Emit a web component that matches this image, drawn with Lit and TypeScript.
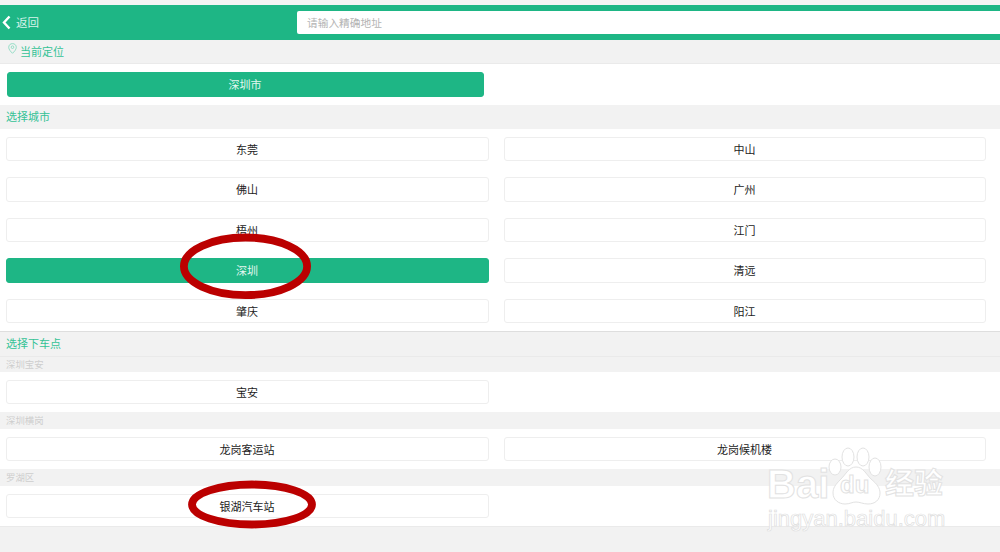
import { LitElement, html, css } from 'lit';
import { customElement } from 'lit/decorators.js';

const cities = ['东莞', '中山', '佛山', '广州', '梧州', '江门', '深圳', '清远', '肇庆', '阳江'];

@customElement('app-root')
export class AppRoot extends LitElement {
  static styles = css`
    :host {
      display: block;
      position: relative;
      width: 1000px;
      height: 552px;
      overflow: hidden;
      background: #f2f2f2;
      font-family: "Liberation Sans", "Noto Sans CJK SC", sans-serif;
      font-size: 11px;
      color: #222;
    }

    .top {
      height: 5px;
      background: #f4f4f4;
    }

    .header {
      height: 35px;
      box-sizing: border-box;
      padding: 6px 0 6px 2px;
      display: flex;
      align-items: center;
      background: #1eb685;
      color: #d8f3ea;
    }

    .back {
      display: flex;
      align-items: center;
      gap: 5px;
      width: 295px;
      font-size: 11.5px;
    }

    .back span {
      margin-top: -2px;
    }

    .search {
      flex: 1;
      height: 23px;
      box-sizing: border-box;
      padding: 0 10px 1px;
      display: flex;
      align-items: center;
      background: #fff;
      border-radius: 2px 0 0 2px;
      color: #b4b4b4;
      font-size: 10.7px;
    }

    .title {
      height: 24px;
      box-sizing: border-box;
      padding: 0 0 2px 6px;
      display: flex;
      align-items: center;
      gap: 3px;
      background: #f2f2f2;
      color: #35c296;
    }

    .title.located {
      border-bottom: 1px solid #eaeaea;
      padding-left: 8px;
    }

    .title.located svg {
      margin-top: -4px;
    }

    .sub {
      height: 16.5px;
      box-sizing: border-box;
      padding: 0 0 1px 6px;
      display: flex;
      align-items: center;
      background: #f2f2f2;
      color: #cecece;
      font-size: 9.4px;
    }

    .sub.first {
      border-top: 1px solid #eaeaea;
      height: 15.5px;
    }

    .panel {
      background: #fff;
      padding: 8px 14px 8px 6px;
      display: grid;
      grid-template-columns: 483px 482px;
      column-gap: 15px;
      row-gap: 16.1px;
    }

    .panel.current {
      padding: 8px 516px 8px 7px;
      grid-template-columns: 477px;
    }

    .panel.cities {
      border-bottom: 1px solid #dedede;
    }

    .panel.last {
      border-bottom: 1px solid #eaeaea;
    }

    .btn {
      height: 24.5px;
      box-sizing: border-box;
      padding: 0 1px 0.4px 0;
      display: flex;
      align-items: center;
      justify-content: center;
      background: #fff;
      border: 1px solid #eeeeee;
      border-radius: 3px;
    }

    .btn.on {
      background: #1eb685;
      border-color: #1eb685;
      color: #e4f7f0;
    }

    .marks {
      position: absolute;
      inset: 0;
      pointer-events: none;
    }

    .watermark {
      position: absolute;
      left: 767px;
      top: 445px;
      width: 190px;
      height: 90px;
      pointer-events: none;
      color: #fff;
      -webkit-text-stroke: 1px #e2e2e2;
    }

    .wm-brand {
      position: absolute;
      left: 0;
      top: 17px;
      font-family: "Liberation Sans", sans-serif;
      font-size: 40px;
      font-weight: 700;
      line-height: 44px;
      white-space: nowrap;
    }

    .wm-du {
      position: absolute;
      left: 73px;
      top: 27px;
      font-family: "Liberation Sans", sans-serif;
      font-size: 24px;
      font-weight: 700;
      line-height: 26px;
    }

    .wm-cn {
      position: absolute;
      left: 118px;
      top: 16px;
      font-family: "Noto Sans CJK SC", sans-serif;
      font-size: 29px;
      font-weight: 700;
      line-height: 40px;
      white-space: nowrap;
    }

    .wm-url {
      position: absolute;
      left: 1px;
      top: 62px;
      font-family: "Liberation Sans", sans-serif;
      font-size: 22px;
      line-height: 24px;
      white-space: nowrap;
      -webkit-text-stroke: 0.7px #dedede;
    }

    .watermark svg {
      position: absolute;
      left: 0;
      top: 0;
    }
  `;

  render() {
    return html`
      <div class="top"></div>
      <div class="header">
        <div class="back">
          <svg width="9" height="15" viewBox="0 0 9 15">
            <path d="M7.5 1.5 2 7.5l5.500 6" fill="none" stroke="#fff" stroke-width="2.400"></path>
          </svg>
          <span>返回</span>
        </div>
        <div class="search">请输入精确地址</div>
      </div>

      <div class="title located">
        <svg width="9" height="11" viewBox="0 0 9 11">
          <path d="M4.500.6C2.300.6.700 2.200.700 4.300c0 2.300 2.200 4.400 3.800 6 1.600-1.600 3.800-3.700 3.800-6C8.300 2.200 6.700.6 4.500.6z" fill="none" stroke="#7fd8bb" stroke-width=".8"></path>
          <circle cx="4.500" cy="4.200" r="1.300" fill="none" stroke="#7fd8bb" stroke-width=".8"></circle>
        </svg>
        <span>当前定位</span>
      </div>
      <div class="panel current"><div class="btn on">深圳市</div></div>

      <div class="title">选择城市</div>
      <div class="panel cities">
        ${cities.map((c) => html`<div class="btn ${c === '深圳' ? 'on' : ''}">${c}</div>`)}
      </div>

      <div class="title">选择下车点</div>
      <div class="sub first">深圳宝安</div>
      <div class="panel"><div class="btn">宝安</div></div>
      <div class="sub">深圳横岗</div>
      <div class="panel">
        <div class="btn">龙岗客运站</div>
        <div class="btn">龙岗候机楼</div>
      </div>
      <div class="sub">罗湖区</div>
      <div class="panel last"><div class="btn">银湖汽车站</div></div>

      <svg class="marks" width="1000" height="552" viewBox="0 0 1000 552">
        <ellipse cx="245.500" cy="266.300" rx="61.600" ry="28.800" fill="none" stroke="#bb0000" stroke-width="7.800"></ellipse>
        <ellipse cx="252" cy="504.500" rx="60" ry="20" fill="none" stroke="#bb0000" stroke-width="7.800"></ellipse>
      </svg>

      <div class="watermark">
        <svg width="190" height="60" viewBox="0 0 190 60">
          <g fill="#fff" stroke="#e2e2e2">
            <ellipse cx="68" cy="22" rx="6" ry="8"></ellipse>
            <ellipse cx="81" cy="12" rx="6" ry="9"></ellipse>
            <ellipse cx="96" cy="12" rx="6" ry="9"></ellipse>
            <ellipse cx="108" cy="22" rx="6" ry="9"></ellipse>
            <path d="M89 22c-7 0-10 7-15 12-6 6-8 9-8 14 0 7 6 11 12 11 5 0 7-2 11-2s7 2 12 2c7 0 12-4 12-11 0-5-3-9-9-14-5-5-8-12-15-12z"></path>
          </g>
        </svg>
        <span class="wm-brand">Bai</span>
        <span class="wm-du">du</span>
        <span class="wm-cn">经验</span>
        <span class="wm-url">jingyan.baidu.com</span>
      </div>
    `;
  }
}
